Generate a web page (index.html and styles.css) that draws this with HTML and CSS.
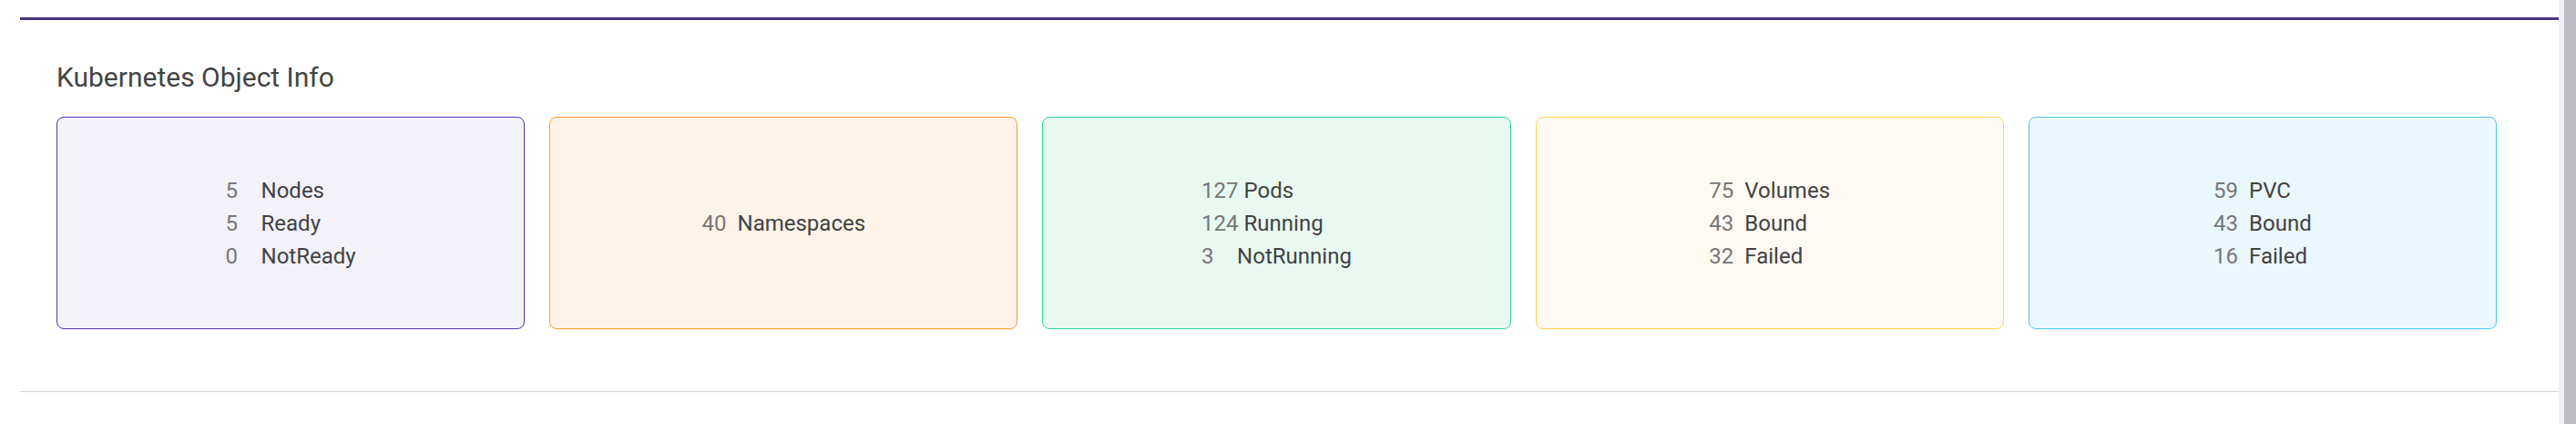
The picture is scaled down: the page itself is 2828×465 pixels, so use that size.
FILE: index.html
```html
<!DOCTYPE html>
<html lang="en">
<head>
<meta charset="utf-8">
<title>Kubernetes Object Info</title>
<link rel="stylesheet" href="styles.css">
</head>
<body>
<div class="page">
  <main class="content">
    <section class="panel">
      <h2 class="panel-title">Kubernetes Object Info</h2>
      <div class="cards">
        <div class="card card--nodes">
          <div class="stats">
            <div class="stat"><span class="num">5</span><span class="label">Nodes</span></div>
            <div class="stat"><span class="num">5</span><span class="label">Ready</span></div>
            <div class="stat"><span class="num">0</span><span class="label">NotReady</span></div>
          </div>
        </div>
        <div class="card card--namespaces">
          <div class="stats">
            <div class="stat"><span class="num">40</span><span class="label">Namespaces</span></div>
          </div>
        </div>
        <div class="card card--pods">
          <div class="stats">
            <div class="stat"><span class="num">127</span><span class="label">Pods</span></div>
            <div class="stat"><span class="num">124</span><span class="label">Running</span></div>
            <div class="stat"><span class="num">3</span><span class="label">NotRunning</span></div>
          </div>
        </div>
        <div class="card card--volumes">
          <div class="stats">
            <div class="stat"><span class="num">75</span><span class="label">Volumes</span></div>
            <div class="stat"><span class="num">43</span><span class="label">Bound</span></div>
            <div class="stat"><span class="num">32</span><span class="label">Failed</span></div>
          </div>
        </div>
        <div class="card card--pvc">
          <div class="stats">
            <div class="stat"><span class="num">59</span><span class="label">PVC</span></div>
            <div class="stat"><span class="num">43</span><span class="label">Bound</span></div>
            <div class="stat"><span class="num">16</span><span class="label">Failed</span></div>
          </div>
        </div>
      </div>
    </section>
  </main>
  <div class="scrollbar"><div class="scrollbar-thumb"></div></div>
</div>
</body>
</html>
```

FILE: styles.css
```css
html, body {
  margin: 0;
  padding: 0;
  background: #ffffff;
}

body {
  font-family: Roboto, "Liberation Sans", Arial, sans-serif;
  color: #424242;
}

.page {
  display: flex;
  height: 465px;
  overflow: hidden;
}

.content {
  flex: 1;
  min-width: 0;
  padding: 19px 0 0 22px;
}

.panel {
  border-top: 3px solid #4a357a;
  border-bottom: 1px solid #d6d5dd;
  padding: 0 68px 68px 40px;
}

.panel-title {
  margin: 46px 0 27px;
  font-size: 30px;
  line-height: 33px;
  font-weight: 400;
  color: #444444;
}

.cards {
  display: grid;
  grid-template-columns: repeat(5, 1fr);
  column-gap: 27px;
}

.card {
  box-sizing: border-box;
  height: 233px;
  border: 1px solid;
  border-radius: 8px;
  display: flex;
  align-items: center;
  justify-content: center;
}

.card--nodes {
  border-color: #5a34ad;
  background: #f3f2f8;
}

.card--namespaces {
  border-color: #ff982f;
  background: #fdf3e9;
}

.card--pods {
  border-color: #33d69b;
  background: #e8f9f1;
}

.card--volumes {
  border-color: #ffd44f;
  background: #fef9f3;
}

.card--pvc {
  border-color: #4ccaef;
  background: #eaf7fd;
}

.stats {
  display: flex;
  flex-direction: column;
}

.stat {
  display: flex;
  font-size: 24px;
  line-height: 36px;
}

.num {
  min-width: 33px;
  margin-right: 6px;
  color: #777777;
}

.label {
  color: #424242;
}

.scrollbar {
  width: 19px;
  flex: none;
  background: #eef1f7;
  display: flex;
  justify-content: flex-end;
}

.scrollbar-thumb {
  width: 13px;
  background: #bdbcc2;
}
```
